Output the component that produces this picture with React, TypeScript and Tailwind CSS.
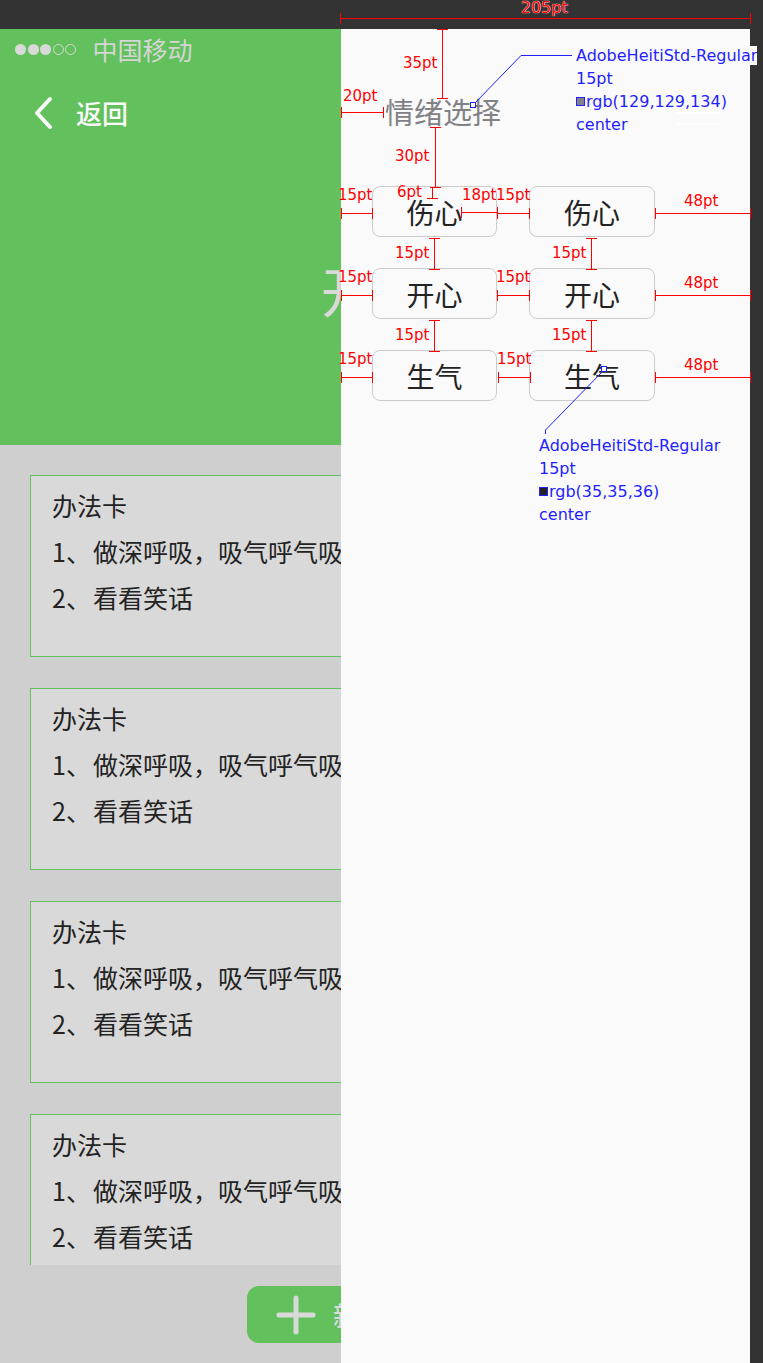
const moods = ["伤心", "伤心", "开心", "开心", "生气", "生气"]

const hLines: [number, number, number][] = [
  [18, 340, 750],
  [112, 341, 383],
  [213, 341, 372],
  [212, 461, 497],
  [213, 497, 529],
  [213, 655, 750],
  [295, 341, 372],
  [295, 497, 529],
  [295, 655, 750],
  [377, 341, 372],
  [377, 498, 530],
  [377, 655, 750],
]

const vLines: [number, number, number][] = [
  [442, 29, 98],
  [435, 127, 187],
  [434, 238, 269],
  [591, 238, 269],
  [434, 320, 351],
  [591, 320, 351],
]

const labels: [string, number, number][] = [
  ["35pt", 403, 63],
  ["20pt", 343, 96],
  ["30pt", 395, 156],
  ["6pt", 397, 192],
  ["18pt", 462, 195],
  ["15pt", 496, 195],
  ["15pt", 338, 195],
  ["15pt", 338, 277],
  ["15pt", 338, 359],
  ["15pt", 496, 277],
  ["15pt", 497, 359],
  ["48pt", 684, 201],
  ["48pt", 684, 283],
  ["48pt", 684, 365],
  ["15pt", 395, 253],
  ["15pt", 395, 335],
  ["15pt", 552, 253],
  ["15pt", 552, 335],
]

function Card() {
  return (
    <div className="h-[182px] shrink-0 border border-[#62c15c] bg-[#d9d9d9] pl-[21px] pt-[6px] text-[25px] leading-[46px] text-[#232323]">
      <p>办法卡</p>
      <p className="whitespace-nowrap">1、<span className="ml-[2px]">做深呼吸，吸气呼气吸气呼气</span></p>
      <p>2、<span className="ml-[2px]">看看笑话</span></p>
    </div>
  )
}

function Spec({ swatch, color }: { swatch: string; color: string }) {
  return (
    <div className="font-['DejaVu_Sans',sans-serif] text-[16px] leading-[23px] text-[#1f1fff] whitespace-nowrap">
      <p><span className="bg-[#fafafa]">AdobeHeitiStd-Regular</span></p>
      <p>15pt</p>
      <p className="flex items-center">
        <span className={`mr-[1px] inline-block size-[9px] border border-[#1f1fff] ${swatch}`} />
        {color}
      </p>
      <p>center</p>
    </div>
  )
}

function Annotations() {
  return (
    <div className="pointer-events-none absolute inset-0">
      <svg className="absolute inset-0" width="763" height="1363">
        <g stroke="#ff0000" strokeWidth="1" fill="none">
          {hLines.map(([y, x1, x2], i) => (
            <g key={"h" + i}>
              <line x1={x1} y1={y + 0.5} x2={x2} y2={y + 0.5} />
              <line x1={x1 + 0.5} y1={y - 5} x2={x1 + 0.5} y2={y + 6} />
              <line x1={x2 + 0.5} y1={y - 5} x2={x2 + 0.5} y2={y + 6} />
            </g>
          ))}
          {vLines.map(([x, y1, y2], i) => (
            <g key={"v" + i}>
              <line x1={x + 0.5} y1={y1} x2={x + 0.5} y2={y2} />
              <line x1={x - 5} y1={y1 + 0.5} x2={x + 6} y2={y1 + 0.5} />
              <line x1={x - 5} y1={y2 + 0.5} x2={x + 6} y2={y2 + 0.5} />
            </g>
          ))}
          <line x1={432.5} y1={187} x2={432.5} y2={198} />
          <line x1={427} y1={198.5} x2={438} y2={198.5} />
        </g>
        <g stroke="#1f1fff" strokeWidth="1" fill="none">
          <polyline points="474,104 521,55.5 572,55.5" />
          <rect x={470.5} y={102.5} width={5} height={5} fill="#fff" />
          <polyline points="603,371 545.5,430 545.5,434" />
          <rect x={601.5} y={366.5} width={5} height={5} fill="#fff" />
        </g>
        <g stroke="#ffffff" strokeWidth="2">
          <line x1={677} y1={113} x2={721} y2={113} />
          <line x1={677} y1={124} x2={721} y2={124} />
        </g>
      </svg>

      <span className="absolute left-[521px] top-[-1px] font-['DejaVu_Sans',sans-serif] text-[16px] leading-[18px] text-[#ff0000] [text-shadow:0_0_1px_#fff,0_0_1px_#fff]">
        205pt
      </span>
      {labels.map(([t, x, cy], i) => (
        <span
          key={i}
          className="absolute font-['DejaVu_Sans',sans-serif] text-[15px] leading-[18px] text-[#ff0000] [text-shadow:0_0_1px_#fff]"
          style={{ left: x, top: cy - 9 }}
        >
          {t}
        </span>
      ))}

      <div className="absolute left-[576px] top-[44px]">
        <Spec swatch="bg-[rgb(129,129,134)]" color="rgb(129,129,134)" />
      </div>
      <div className="absolute left-[539px] top-[434px]">
        <Spec swatch="bg-[rgb(35,35,36)]" color="rgb(35,35,36)" />
      </div>
    </div>
  )
}

export default function App() {
  return (
    <div className="relative h-[1363px] w-[763px] overflow-hidden bg-[#333333] font-['Noto_Sans_CJK_SC',sans-serif]">
      <div className="h-[29px]" />
      <div className="flex h-[1334px]">
        {/* dimmed app screen behind the drawer */}
        <div className="w-[341px] shrink-0 overflow-hidden">
          <div className="flex h-full w-[750px] flex-col">
            <header className="flex h-[416px] flex-col bg-[#62c15c]">
              <div className="flex h-[40px] items-center pl-[15px]">
                <div className="flex gap-[1.6px]">
                  <span className="size-[11px] rounded-full bg-[#d9d9d9]" />
                  <span className="size-[11px] rounded-full bg-[#d9d9d9]" />
                  <span className="size-[11px] rounded-full bg-[#d9d9d9]" />
                  <span className="size-[11px] rounded-full border border-[#d9d9d9]" />
                  <span className="size-[11px] rounded-full border border-[#d9d9d9]" />
                </div>
                <span className="ml-[16px] text-[25px] leading-none text-[#d5d5d5]">中国移动</span>
              </div>
              <div className="flex h-[88px] items-center pl-[33px]">
                <svg width="22" height="34" viewBox="0 0 22 34">
                  <polyline
                    points="17,3 4,17 17,31"
                    fill="none"
                    stroke="#fafafa"
                    strokeWidth="4"
                    strokeLinecap="round"
                    strokeLinejoin="round"
                  />
                </svg>
                <span className="ml-[21px] text-[26px] font-medium leading-none text-[#fafafa]">返回</span>
              </div>
              <h1 className="mt-[103px] text-center text-[54px] leading-[60px] text-[#d9d9d9]">开心</h1>
            </header>

            <main className="flex flex-1 flex-col bg-[#cfcfcf]">
              <div className="flex h-[820px] flex-col gap-[31px] overflow-hidden px-[30px] pt-[30px]">
                <Card />
                <Card />
                <Card />
                <Card />
              </div>
              <div className="flex justify-center pt-[21px]">
                <button className="flex h-[57px] w-[256px] items-center gap-[17px] rounded-[12px] bg-[#62c15c] pl-[29px] text-[26px] font-medium text-[#d9d9d9]">
                  <svg width="40" height="40" viewBox="0 0 40 40">
                    <path d="M20 3v34M3 20h34" stroke="#d9d9d9" strokeWidth="5" strokeLinecap="round" />
                  </svg>
                  新建办法卡
                </button>
              </div>
            </main>
          </div>
        </div>

        {/* mood drawer */}
        <aside className="w-[409px] shrink-0 bg-[#fafafa]">
          <h2 className="pl-[44px] pt-[67px] text-[29px] leading-[30px] text-[rgb(129,129,134)]">情绪选择</h2>
          <div className="ml-[31px] mt-[60px] grid grid-cols-[125px_126px] gap-x-[32px] gap-y-[31px]">
            {moods.map((m, i) => (
              <div
                key={i}
                className="flex h-[51px] items-center justify-center rounded-[8px] border border-[#cccccc] text-[28px] text-[rgb(35,35,36)]"
              >
                {m}
              </div>
            ))}
          </div>
        </aside>
      </div>

      <Annotations />
    </div>
  )
}
